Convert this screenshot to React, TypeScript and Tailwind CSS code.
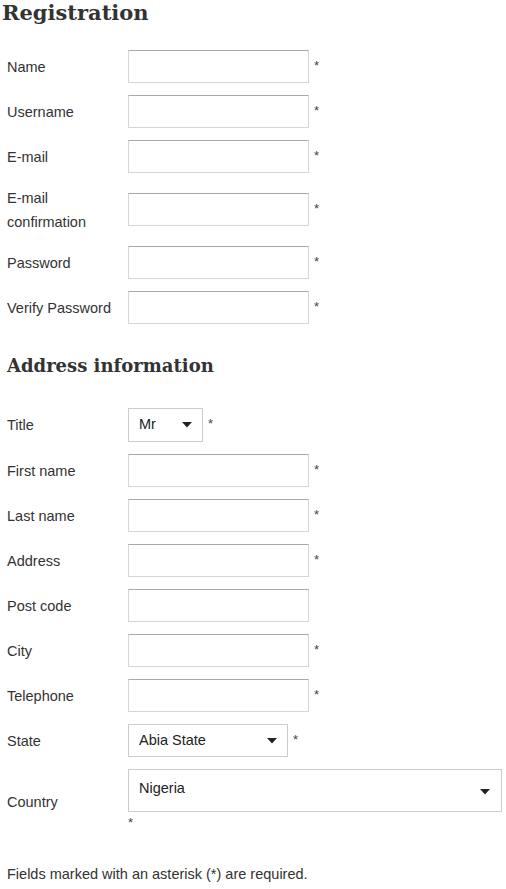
import React from 'react';

type Field = {
  label: React.ReactNode;
  kind: 'text' | 'select';
  value?: string;
  width?: string;
  height?: string;
  tall?: boolean;
  required?: boolean;
};

const account: Field[] = [
  { label: 'Name', kind: 'text', required: true },
  { label: 'Username', kind: 'text', required: true },
  { label: 'E-mail', kind: 'text', required: true },
  {
    label: (
      <>
        E-mail
        <br />
        confirmation
      </>
    ),
    kind: 'text',
    tall: true,
    required: true,
  },
  { label: 'Password', kind: 'text', required: true },
  { label: 'Verify Password', kind: 'text', required: true },
];

const address: Field[] = [
  { label: 'Title', kind: 'select', value: 'Mr', width: 'w-[75px]', height: 'h-[34px]', required: true },
  { label: 'First name', kind: 'text', required: true },
  { label: 'Last name', kind: 'text', required: true },
  { label: 'Address', kind: 'text', required: true },
  { label: 'Post code', kind: 'text' },
  { label: 'City', kind: 'text', required: true },
  { label: 'Telephone', kind: 'text', required: true },
  { label: 'State', kind: 'select', value: 'Abia State', width: 'w-[160px]', height: 'h-[33px]', required: true },
];

function Arrow() {
  return (
    <svg width="10" height="6" viewBox="0 0 10 6" className="shrink-0">
      <path d="M0 0h10L5 5.5z" fill="#222" />
    </svg>
  );
}

function Row({ field }: { field: Field }) {
  return (
    <div className={`flex items-center ${field.tall ? 'py-[0.5px]' : ''}`}>
      <label className="w-[121px] shrink-0 leading-[24px]">{field.label}</label>
      {field.kind === 'text' ? (
        <input
          type="text"
          className="h-[33px] w-[181px] border border-[#d6d6d6] border-t-[#aaa] bg-white px-2 outline-none"
        />
      ) : (
        <div
          className={`flex items-center justify-between border border-[#ccc] bg-white pl-[10px] pr-[10px] text-[#222] ${field.width} ${field.height}`}
        >
          <span>{field.value}</span>
          <Arrow />
        </div>
      )}
      {field.required && <span className="mb-[2px] ml-[5px] text-[13px] text-[#444]">*</span>}
    </div>
  );
}

export default function App() {
  return (
    <div className="min-h-[889px] w-[506px] bg-white font-['Liberation_Sans',Arial,sans-serif] text-[14.5px] text-[#333]">
      <h1 className="pl-[2px] font-['DejaVu_Serif',Georgia,serif] text-[21px] font-bold leading-[26px] text-[#333]">
        Registration
      </h1>

      <div className="pl-[7px]">
        <div className="mt-[24px] flex flex-col gap-[12px]">
          {account.map((f, i) => (
            <Row key={i} field={f} />
          ))}
        </div>

        <h2 className="mt-[30px] font-['DejaVu_Serif',Georgia,serif] text-[18px] font-bold leading-[24px] text-[#333]">
          Address information
        </h2>

        <div className="mt-[30px] flex flex-col gap-[12px]">
          {address.map((f, i) => (
            <Row key={i} field={f} />
          ))}

          <div className="flex items-center">
            <label className="w-[121px] shrink-0 leading-[24px]">Country</label>
            <div className="flex flex-col">
              <div className="flex h-[43px] w-[374px] justify-between border border-[#ccc] bg-white pl-[10px] pr-[11px] text-[#222]">
                <span className="pt-[8px]">Nigeria</span>
                <span className="pt-[19px]">
                  <Arrow />
                </span>
              </div>
              <span className="text-[13px] leading-[22px] text-[#444]">*</span>
            </div>
          </div>
        </div>

        <p className="mt-[30px] leading-[20px]">Fields marked with an asterisk (*) are required.</p>
      </div>
    </div>
  );
}
